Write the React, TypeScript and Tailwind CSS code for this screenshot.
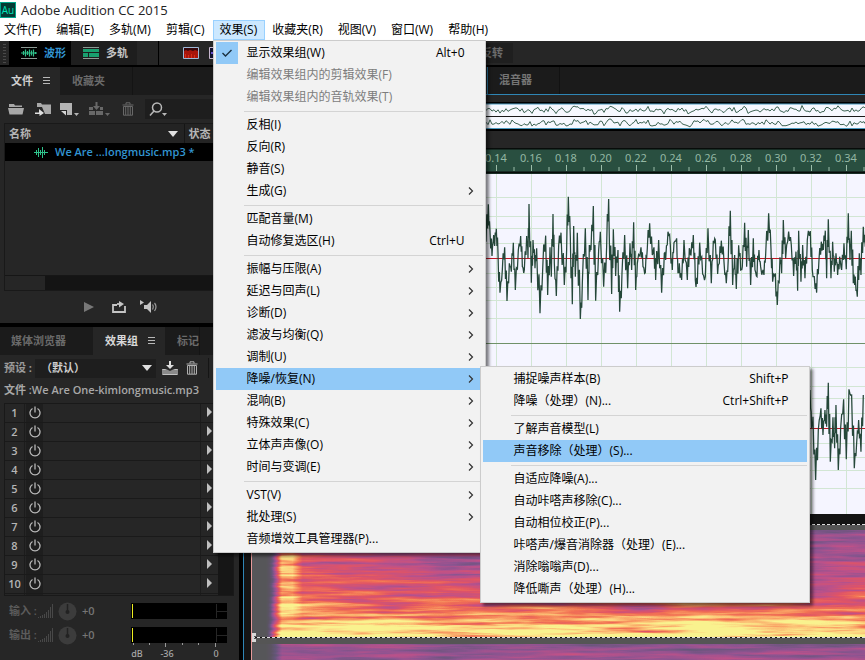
import React from "react";

type Entry = {
  label: string;
  keys?: string;
  disabled?: boolean;
  checked?: boolean;
  more?: boolean;
  active?: boolean;
  children?: Entry[][];
};

const denoise: Entry[][] = [
  [
    { label: "捕捉噪声样本(B)", keys: "Shift+P" },
    { label: "降噪（处理）(N)...", keys: "Ctrl+Shift+P" },
  ],
  [{ label: "了解声音模型(L)" }, { label: "声音移除（处理）(S)...", active: true }],
  [
    { label: "自适应降噪(A)..." },
    { label: "自动咔嗒声移除(C)..." },
    { label: "自动相位校正(P)..." },
    { label: "咔嗒声/爆音消除器（处理）(E)..." },
    { label: "消除嗡嗡声(D)..." },
    { label: "降低嘶声（处理）(H)..." },
  ],
];

const effects: Entry[][] = [
  [
    { label: "显示效果组(W)", keys: "Alt+0", checked: true },
    { label: "编辑效果组内的剪辑效果(F)", disabled: true },
    { label: "编辑效果组内的音轨效果(T)", disabled: true },
  ],
  [{ label: "反相(I)" }, { label: "反向(R)" }, { label: "静音(S)" }, { label: "生成(G)", more: true }],
  [{ label: "匹配音量(M)" }, { label: "自动修复选区(H)", keys: "Ctrl+U" }],
  [
    { label: "振幅与压限(A)", more: true },
    { label: "延迟与回声(L)", more: true },
    { label: "诊断(D)", more: true },
    { label: "滤波与均衡(Q)", more: true },
    { label: "调制(U)", more: true },
    { label: "降噪/恢复(N)", more: true, active: true, children: denoise },
    { label: "混响(B)", more: true },
    { label: "特殊效果(C)", more: true },
    { label: "立体声声像(O)", more: true },
    { label: "时间与变调(E)", more: true },
  ],
  [{ label: "VST(V)", more: true }, { label: "批处理(S)", more: true }, { label: "音频增效工具管理器(P)..." }],
];

const menus = ["文件(F)", "编辑(E)", "多轨(M)", "剪辑(C)", "效果(S)", "收藏夹(R)", "视图(V)", "窗口(W)", "帮助(H)"];

function Menu({ groups, className }: { groups: Entry[][]; className: string }) {
  return (
    <div
      role="menu"
      className={`absolute border border-[#cccccc] bg-[#f2f2f2] px-[2px] pt-px pb-[2px] text-black shadow-[3px_3px_3px_rgba(0,0,0,0.5)] ${className}`}
    >
      {groups.map((group, g) => (
        <React.Fragment key={g}>
          {g > 0 && (
            <div role="separator" className="flex h-[6px] items-center pl-[28px]">
              <div className="h-px w-full bg-[#d4d4d4]" />
            </div>
          )}
          {group.map((e) => (
            <div key={e.label} className="relative">
              <button
                type="button"
                role={e.checked ? "menuitemcheckbox" : "menuitem"}
                aria-checked={e.checked}
                disabled={e.disabled}
                className={`flex h-[22px] w-full items-center text-left text-xs whitespace-nowrap ${e.active ? "bg-[#91c9f7]" : ""} ${e.disabled ? "text-[#7d7d7d]" : ""}`}
              >
                <span className="mr-[9px] flex h-full w-[22px] shrink-0 items-center justify-center">
                  {e.checked && (
                    <span className="flex h-full w-full items-center justify-center bg-[#91c9f7]">
                      <svg width="12" height="10" viewBox="0 0 12 10" fill="none" stroke="#1b3040" strokeWidth="1.4">
                        <path d="M1.5 5 4.5 8 10.5 2" />
                      </svg>
                    </span>
                  )}
                </span>
                <span className="flex-1">{e.label}</span>
                {e.keys && <span className="mr-[18px]">{e.keys}</span>}
                {e.more && (
                  <svg className="mr-[9px]" width="6" height="10" viewBox="0 0 6 10" fill="none" stroke="#333" strokeWidth="1.2">
                    <path d="M1 1.5 4.5 5 1 8.5" />
                  </svg>
                )}
              </button>
              {e.children && <Menu groups={e.children} className="-top-[2px] left-[264px] w-[330px]" />}
            </div>
          ))}
        </React.Fragment>
      ))}
    </div>
  );
}

function MenuBar() {
  return (
    <nav className="relative z-50 h-[21px] bg-white text-xs text-black">
      <div role="menubar" className="flex">
        {menus.map((m, i) => (
          <div key={m} className="relative">
            <button
              type="button"
              className={`h-5 border pr-[7px] whitespace-nowrap ${i === 0 ? "pl-[3px]" : "pl-[6px]"} ${i === 4 ? "border-[#99d1ff] bg-[#cce8ff]" : "border-transparent"}`}
            >
              {m}
            </button>
            {i === 4 && <Menu groups={effects} className="top-full left-0 w-[273px]" />}
          </div>
        ))}
      </div>
    </nav>
  );
}

const Down = () => (
  <svg width="10" height="6" viewBox="0 0 10 6" fill="#e0e0e0">
    <path d="M0 0h10L5 6z" />
  </svg>
);

const Bars = () => (
  <svg width="8" height="8" viewBox="0 0 8 8" stroke="#b8b8b8" strokeWidth="1">
    <path d="M0 .5h7M0 3.5h7M0 6.5h7" />
  </svg>
);

const Trash = ({ color }: { color: string }) => (
  <svg width="12" height="14" viewBox="0 0 12 14" fill="none" stroke={color}>
    <path d="M.5 3h11M4 2.5V.8h4v1.7M1.5 4.5h9v8.7h-9zM3.7 5v8M6 5v8M8.300 5v8" />
  </svg>
);

function AppToolbar() {
  return (
    <div className="flex h-6 items-stretch bg-[#262626] text-[11px] font-bold">
      <svg width="9" height="24" viewBox="0 0 9 24" className="shrink-0">
        <path d="M4.500 3v20" stroke="#4a4a4a" strokeWidth="3" strokeDasharray="1 2" />
      </svg>
      <button type="button" className="flex w-[62px] items-center gap-[7px] bg-black pl-3 text-[#3295d2]">
        <svg width="16" height="12" viewBox="0 0 16 12" fill="none">
          <path d="M0 .5h16M0 11.500h16" stroke="#8c9a94" />
          <path d="M0 6h16" stroke="#2fc28b" />
          <path d="M2.500 4v4M4.500 2.500v7M6.500 4v4M8.500 2.500v7M10.500 3.500v5M12.500 2.500v7M14.500 5v2" stroke="#2fc28b" strokeWidth="1.200" />
        </svg>
        波形
      </button>
      <button type="button" className="flex w-[66px] items-center gap-[7px] bg-[#1e1e1e] pl-3 text-[#c4c4c4]">
        <svg width="16" height="12" viewBox="0 0 16 12">
          <path d="M0 .5h16M0 11.500h16" stroke="#8c9a94" />
          <path d="M0 2h16v3H0zM0 6h5v4H0zM6 6h10v4H6z" fill="#19a06f" />
        </svg>
        多轨
      </button>
      <span className="ml-[21px] w-px bg-black" />
      <button type="button" aria-label="频谱频率显示" className="ml-6">
        <svg width="16" height="12" viewBox="0 0 16 12">
          <path d="M.5.5h15v11H.5z" fill="#a8160c" stroke="#9db9d8" />
          <path d="M1 4 3 3l2 1 2-1 3 1 2-1 3 1V1H1z" fill="#35060a" />
          <path d="M2.500 7v4M5.500 8v3M8.500 7v4M11.500 8v3" stroke="#d82c16" />
        </svg>
      </button>
      <button type="button" aria-label="频谱音高显示" className="ml-[10px]">
        <svg width="16" height="12" viewBox="0 0 16 12">
          <path d="M.5.500h15v11H.5z" fill="#101030" stroke="#c8b8d0" />
          <path d="M2 6h12" stroke="#6a52d0" strokeWidth="2" />
        </svg>
      </button>
      <button type="button" className="my-[2px] ml-[240px] w-[48px] bg-[#1f1f1f] pr-[10px] text-right text-[#6b6b6b]">
        反转
      </button>
    </div>
  );
}

function FilesPanel() {
  return (
    <section className="flex h-[256px] flex-col bg-[#262626]">
      <div role="tablist" className="flex h-7 bg-[#1b1b1b] text-[11px] font-bold">
        <button type="button" role="tab" className="flex w-[60px] items-center gap-[10px] bg-[#262626] pl-[11px] text-[#d0d0d0]">
          文件
          <Bars />
        </button>
        <button type="button" role="tab" className="w-[73px] border-r border-[#141414] pl-3 text-left text-[#6a6a6a]">
          收藏夹
        </button>
      </div>
      <div className="flex h-[28px] items-center text-[#b0b0b0]">
        <button type="button" aria-label="打开文件" className="ml-2">
          <svg width="16" height="12" viewBox="0 0 16 12" fill="#a8a8a8">
            <path d="M1 4V1h5l1 1.500h7V4zM0 5h16l-1.500 6.500h-13z" />
          </svg>
        </button>
        <button type="button" aria-label="导入文件" className="ml-[11px]">
          <svg width="17" height="14" viewBox="0 0 17 14" fill="#a8a8a8">
            <path d="M2 5V1h4l1 1.500h9V12h-6L7 5z" />
            <path d="M0 10.500h4V7l5 4-4.500 3v-2H0z" fill="#dedede" />
          </svg>
        </button>
        <button type="button" aria-label="新建文件" className="ml-2">
          <svg width="20" height="15" viewBox="0 0 20 15" fill="#b4b4b4">
            <path d="M0 1h12v12H7V8H0z" />
            <path d="M1 9h5v4.500z" fill="#d6d6d6" />
            <path d="M14 11h5l-2.500 3z" />
          </svg>
        </button>
        <button type="button" aria-label="插入到多轨混音" className="ml-[9px]">
          <svg width="22" height="15" viewBox="0 0 22 15" fill="#686868">
            <path d="M0 5h4v3H0zM11 5h3v3h-3zM0 9h6v4H0zM7 9h7v4H7zM6.500 0h2v4H11L7.500 8 4 4h2.500z" />
            <path d="M16 11h5l-2.500 3z" />
          </svg>
        </button>
        <button type="button" aria-label="删除" className="mr-[11px] ml-[11px]">
          <Trash color="#686868" />
        </button>
        <label className="flex h-5 flex-1 items-center bg-[#1e1e1e] pl-1">
          <svg className="shrink-0" width="20" height="15" viewBox="0 0 20 15" fill="none" stroke="#b8b8b8" strokeWidth="1.500">
            <circle cx="8" cy="5.500" r="4.500" />
            <path d="M5 9 1 13.500" />
            <path d="M13 11h5l-2.500 3z" fill="#b8b8b8" stroke="none" />
          </svg>
          <input type="search" aria-label="搜索" className="w-full min-w-0 bg-transparent outline-none" />
        </label>
      </div>
      <div className="ml-1 flex flex-1 flex-col border border-[#191919]">
        <table className="w-full table-fixed border-collapse text-[11px] font-semibold text-[#b5b5b5]">
          <thead>
            <tr className="h-[19px] bg-[#232323]">
              <th className="w-[179px] border-r border-[#151515] p-0 pl-1 text-left leading-[18px]">
                <span className="flex items-center justify-between pr-[6px]">
                  名称
                  <Down />
                </span>
              </th>
              <th className="p-0 pl-1 text-left leading-[18px]">状态</th>
            </tr>
          </thead>
          <tbody>
            <tr className="h-[18px] bg-black">
              <td colSpan={2} className="p-0 leading-[18px] whitespace-nowrap text-[#3295d2]">
                <span className="flex items-center gap-[7px] pl-[29px]">
                  <svg width="14" height="11" viewBox="0 0 14 11" stroke="#2fc28b" fill="none">
                    <path d="M0 5.500h14M2.500 3v5M4.500 1v9M6.500 3v5M8.500 0v11M10.500 3v5" />
                  </svg>
                  We Are ...longmusic.mp3 *
                </span>
              </td>
            </tr>
          </tbody>
        </table>
        <div className="flex-1" />
        <div className="h-[15px] border-t border-[#161616] bg-[#141414]">
          <div className="h-full w-10 bg-[#262626]" />
        </div>
      </div>
      <div className="flex h-[32px] items-center pb-px pl-[84px]">
        <button type="button" aria-label="播放">
          <svg width="10" height="10" viewBox="0 0 10 10" fill="#777">
            <path d="M0 0l10 5L0 10z" />
          </svg>
        </button>
        <button type="button" aria-label="循环播放" className="ml-[18px]">
          <svg width="14" height="12" viewBox="0 0 14 12" fill="none" stroke="#c4c4c4" strokeWidth="1.800">
            <path d="M5 4H1v7h12V5" />
            <path d="M5 3h3" />
            <path d="M7 0l5 3-5 3.500z" fill="#c4c4c4" stroke="none" />
          </svg>
        </button>
        <button type="button" aria-label="自动播放" className="ml-[14px]">
          <svg width="18" height="13" viewBox="0 0 18 13" fill="#c4c4c4">
            <path d="M0 0l4 2.500L0 5zM4 5h3l4-4v12L7 9H4z" />
            <path d="M12.500 4.500q1.500 2 0 5M14.500 3q3 3.500 0 8" fill="none" stroke="#9a9a9a" strokeWidth="1.200" />
          </svg>
        </button>
      </div>
    </section>
  );
}

const Power = () => (
  <svg width="12" height="13" viewBox="0 0 12 13" fill="none" stroke="#b8b8b8" strokeWidth="1.300">
    <path d="M3.500 2.500a5 5 0 1 0 5 0M6 .5v6" />
  </svg>
);

function Level({ label, id }: { label: string; id: string }) {
  return (
    <div className="flex h-6 items-center text-[11px] font-semibold text-[#5c5c5c]">
      <label htmlFor={id} className="w-[29px] shrink-0 whitespace-nowrap">{label} :</label>
      <svg width="16" height="14" viewBox="0 0 16 14" stroke="#484848">
        <path d="M.5 14v-1M2.500 14v-2M4.500 14v-3M6.500 14v-4M8.500 14V8M10.500 14V6M12.500 14V3M14.500 14V0" />
      </svg>
      <svg className="ml-1" width="19" height="19" viewBox="0 0 19 19">
        <circle cx="9.500" cy="9.500" r="9" fill="#3c3c3c" />
        <circle cx="9.500" cy="10" r="2" fill="#222" />
        <path d="M9.500 2v8" stroke="#222" strokeWidth="1.500" />
      </svg>
      <input id={id} defaultValue="+0" className="ml-[5px] w-5 bg-transparent text-[#757575] outline-none" />
      <div className="ml-[29px] flex h-4 w-24 bg-black py-px pl-px">
        <div className="w-px bg-[#eeee20]" />
        <div className="ml-[83px] w-px bg-[#262626]" />
        <div className="flex flex-1 items-center">
          <div className="h-px w-full bg-[#262626]" />
        </div>
      </div>
    </div>
  );
}

function RackPanel() {
  return (
    <section className="mt-1 flex flex-1 flex-col bg-[#262626] text-[11px] font-bold">
      <div role="tablist" className="flex h-7 shrink-0 bg-[#1b1b1b] text-[#6a6a6a]">
        <button type="button" role="tab" className="w-[93px] pl-[11px] text-left">媒体浏览器</button>
        <button type="button" role="tab" className="flex w-[72px] items-center gap-[10px] bg-[#262626] pl-3 text-[#d8d8d8]">
          效果组
          <Bars />
        </button>
        <button type="button" role="tab" className="w-[35px] border-r border-[#141414] text-right">标记</button>
      </div>
      <div className="mt-[2px] flex h-[22px] items-center pl-1 text-[#9a9a9a]">
        <label htmlFor="preset" className="w-[31px] whitespace-nowrap">预设 :</label>
        <div className="relative flex h-[19px] w-[121px] items-center bg-[#1e1e1e]">
          <select id="preset" className="w-full appearance-none bg-transparent pl-[6px] text-[#cfcfcf] outline-none">
            <option>（默认）</option>
          </select>
          <span className="pointer-events-none absolute right-1"><Down /></span>
        </div>
        <button type="button" aria-label="保存预设" className="ml-[6px]">
          <svg width="16" height="14" viewBox="0 0 16 14" fill="#b8b8b8">
            <path d="M7 0h2v4h3L8 8 4 4h3z" fill="#ddd" />
            <path d="M0 8h4l4 2 4-2h4v5.500H0z" fill="#8a8a8a" />
            <path d="M.5 8.500h3M12.500 8.500h3M.5 13.500h15" stroke="#c0c0c0" />
          </svg>
        </button>
        <button type="button" aria-label="删除预设" className="ml-2"><Trash color="#b0b0b0" /></button>
        <span className="ml-[10px] h-5 w-px bg-[#151515]" />
      </div>
      <p className="flex h-6 items-center pb-[2px] pl-1 font-semibold whitespace-nowrap text-[#a8a8a8]">文件 :We Are One-kimlongmusic.mp3</p>
      <div className="mr-[5px] ml-1 flex h-[193px] shrink-0 overflow-hidden border border-[#191919]">
        <ol className="flex-1 font-semibold">
          {[1, 2, 3, 4, 5, 6, 7, 8, 9, 10, 11].map((n) => (
            <li key={n} className="flex h-[19px] border-b border-[#1a1a1a] text-[#b5b5b5]">
              <span className="w-5 border-r border-[#1c1c1c] text-center leading-[17px]">{n < 11 ? n : ""}</span>
              <button type="button" aria-label={`效果 ${n} 开关`} className="ml-px flex w-[17px] items-center justify-center bg-[#1e1e1e] pb-[2px]">
                {n < 11 && <Power />}
              </button>
              <span className="flex-1 border-r border-[#1c1c1c]" />
              <button type="button" aria-label={`效果 ${n} 菜单`} className="w-[17px] pb-[2px] pl-[6px]">
                <svg width="5" height="10" viewBox="0 0 5 10" fill="#c0c0c0"><path d="M0 0l5 5-5 5z" /></svg>
              </button>
            </li>
          ))}
        </ol>
        <div className="w-[15px] bg-[#161616]" />
      </div>
      <div className="pt-[3px] pl-[9px]">
        <Level label="输入" id="gain-in" />
        <Level label="输出" id="gain-out" />
        <svg className="-mt-1 ml-[120px]" width="104" height="17" viewBox="0 0 104 17" fontFamily="Noto Sans, sans-serif" fontSize="9" fontWeight="500" fill="#a8a8a8" textAnchor="middle">
          <path d="M4.500 0v2M20.500 0v2M36.500 0v4M53.500 0v2M69.500 0v2M86.500 0v4" stroke="#999" />
          <text x="8" y="14">dB</text>
          <text x="38" y="14">-36</text>
          <text x="87" y="14">0</text>
        </svg>
      </div>
    </section>
  );
}

const left = "48,215 55,103 60,185 66,258 71,195 74,228 79,176 84,250 90,368 97,300 104,232 111,393 118,280 124,305 130,218 136,360 145,240 152,198 157,290 163,300 170,198 174,265 177,102 184,338 189,210 195,295 200,235 210,430 218,300 227,197 233,375 240,232 244,320 249,132 253,280 259,378 266,228 273,188 283,345 290,238 295,80 301,200 307,403 311,168 316,320 322,188 331,447 337,340 346,175 354,390 358,225 363,240 370,108 377,392 386,240 391,185 401,350 410,228 416,87 425,372 430,178 437,318 444,240 449,425 456,310 464,195 473,355 480,220 485,300 491,157 497,360 502,280 513,232 519,290 526,308 532,235 539,160 547,255 552,232 557,330 566,210 575,368 583,250 587,270 594,185 601,225 607,300 612,218 620,205 624,310 628,280 635,330 642,210 652,330 658,235 663,255 670,195 676,330 682,342 689,218 698,312 706,320 714,175 724,340 730,212 736,210 743,312 748,280 754,212 762,275 769,340 775,265 781,122 788,345 794,255 799,357 806,226 812,300 817,290 824,158 830,290 835,180 842,345 850,205 855,300 861,320 867,240 872,290 882,315 887,255 896,130 903,235 908,335 916,310 922,405 930,262 935,310 940,150 947,265 956,185 964,225 971,318 978,245 983,362 986,182 993,335 998,225 1005,325 1012,210 1021,183 1027,300 1033,320 1040,368 1047,270 1054,215 1060,240 1066,182 1070,325 1075,148 1083,325 1088,215 1093,305 1098,250 1103,315 1109,260 1115,300 1122,220 1129,298 1135,130 1140,270 1144,182 1150,340 1156,320 1162,380 1168,250 1173,315 1180,170 1186,230";
const right = "1005,90 1010,205 1014,170 1022,360 1030,210 1038,145 1044,225 1050,150 1055,200 1060,68 1066,305 1074,172 1079,265 1083,135 1090,330 1097,205 1106,118 1114,298 1122,88 1130,105 1138,325 1145,250 1151,180 1158,275 1165,105";

function detail(points: string, seed: number) {
  let s = seed;
  const rand = () => (s = (s * 16807) % 2147483647) / 2147483647 - 0.5;
  const pts = points.split(" ").map((p) => p.split(",").map(Number));
  const out: string[] = [];
  pts.forEach(([x, y], i) => {
    out.push(`${x},${y}`);
    const next = pts[i + 1];
    if (!next) return;
    const [nx, ny] = next;
    out.push(`${x + (nx - x) * 0.35},${y + (ny - y) * 0.6 + rand() * 30}`);
    out.push(`${x + (nx - x) * 0.7},${y + (ny - y) * 0.45 + rand() * 30}`);
  });
  return out.join(" ");
}

function overview(mid: number, seed: number) {
  let s = seed;
  const rand = () => (s = (s * 16807) % 2147483647) / 2147483647 - 0.5;
  const out: string[] = [];
  for (let x = 0; x < 1600; x += 2) {
    const y = mid + Math.sin(x / 1.9) * 1.2 + Math.sin(x / 5.1 + seed) + rand() * 5;
    out.push(`${x},${y.toFixed(1)}`);
  }
  return out.join(" ");
}

const ticks = Array.from({ length: 60 }, (_, i) => i);
const gridRows = [23, 42, 54, 69, 99, 113, 126, 144];

function Editor() {
  return (
    <main className="flex min-w-0 flex-1 flex-col border-l border-[#2f86b5] bg-[#262626]">
      <div role="tablist" className="flex h-7 shrink-0 border-b border-[#2f86b5] bg-[#1b1b1b] text-[11px] font-bold text-[#757575]">
        <button type="button" role="tab" aria-label="编辑器" className="w-[244px] border-r border-[#2f86b5] bg-[#262626]" />
        <button type="button" role="tab" className="w-[72px] border-r border-[#121212] pl-[11px] text-left">混音器</button>
      </div>
      <svg className="mt-[7px] h-[29px] w-full shrink-0 bg-[#f6f8ff]">
        <path d="M0 1h4000M0 28h4000" stroke="#000" strokeWidth="2" />
        <path d="M0 2h4000M0 26.500h4000" stroke="#4b9ac0" />
        <path d="M0 14.500h4000" stroke="#1a1a1a" />
        <g fill="none" stroke="#3e6454" strokeWidth="1">
          <polyline points={overview(8, 71)} />
          <polyline points={overview(21, 1931)} />
        </g>
      </svg>
      <svg className="mt-[17px] h-[26px] w-full shrink-0 bg-[#294f40]" fontFamily="Noto Sans, sans-serif" fontSize="11">
        <path d="M0 .5h4000M0 24.500h4000" stroke="#080c0a" strokeWidth="2" />
        {ticks.map((i) => (
          <g key={i}>
            {i > 6 && i < 18 && (
              <text x={7 + i * 35} y="14" textAnchor="middle" fill="#94b8a4">{(i * 0.02).toFixed(2)}</text>
            )}
            <path d={`M${7.5 + i * 35} 17v6M${25 + i * 35} 19v4`} stroke="#9dbda9" />
          </g>
        ))}
      </svg>
      <svg className="h-[340px] w-full shrink-0 bg-[#f5f5ff]">
        <g stroke="#d2e6d4">
          {ticks.map((i) => <path key={i} d={`M${7.500 + i * 35} 0v340`} />)}
          {gridRows.map((y) => <path key={y} d={`M0 ${y + 0.5}h4000M0 ${y + 170.5}h4000`} />)}
        </g>
        <path d="M0 169.500h4000" stroke="#6f9168" />
        <path d="M0 84.500h4000M0 254.500h4000" stroke="#c01822" />
        <g fill="none" stroke="#25473a">
          <polyline points={detail(left, 37)} strokeWidth="3.800" transform="translate(226 -4) scale(.3333)" />
          <polyline points={detail(right, 91)} strokeWidth="3.800" transform="translate(231 186) scale(.3333)" />
        </g>
      </svg>
      <svg className="min-h-[146px] w-full flex-1 bg-[#141414]">
        <defs>
          <filter id="heat" x="0" y="0" width="100%" height="100%" colorInterpolationFilters="sRGB">
            <feTurbulence type="fractalNoise" baseFrequency="0.012 0.22" numOctaves="4" seed="8" />
            <feColorMatrix values="1 0 0 0 0 1 0 0 0 0 1 0 0 0 0 0 0 0 0 1" result="noise" />
            <feComposite in="SourceGraphic" in2="noise" operator="arithmetic" k1="1" k2="0.5" k3="0" k4="0" />
            <feComponentTransfer>
              <feFuncR type="table" tableValues="0.34 0.36 0.4 0.56 0.74 0.88 0.95 0.98 0.99 0.98" />
              <feFuncG type="table" tableValues="0.34 0.33 0.34 0.33 0.32 0.33 0.45 0.64 0.83 0.95" />
              <feFuncB type="table" tableValues="0.35 0.39 0.48 0.57 0.54 0.4 0.33 0.4 0.5 0.56" />
              <feFuncA type="linear" slope="0" intercept="1" />
            </feComponentTransfer>
          </filter>
          <linearGradient id="level" x1="0" y1="0" x2="0" y2="1">
            <stop offset="0" stopColor="#555" />
            <stop offset=".3" stopColor="#686868" />
            <stop offset=".6" stopColor="#808080" />
            <stop offset=".76" stopColor="#a2a2a2" />
            <stop offset=".86" stopColor="#dadada" />
            <stop offset="1" stopColor="#fff" />
          </linearGradient>
          <linearGradient id="attack" gradientUnits="userSpaceOnUse" x1="16" y1="0" x2="220" y2="0">
            <stop offset="0" stopColor="#fff" stopOpacity=".1" />
            <stop offset=".06" stopColor="#fff" stopOpacity=".7" />
            <stop offset=".12" stopColor="#fff" stopOpacity=".7" />
            <stop offset=".17" stopColor="#fff" stopOpacity=".22" />
            <stop offset=".6" stopColor="#fff" stopOpacity=".1" />
            <stop offset="1" stopColor="#fff" stopOpacity="0" />
          </linearGradient>
          <linearGradient id="silence" gradientUnits="userSpaceOnUse" x1="14" y1="0" x2="30" y2="0">
            <stop offset="0" stopColor="#000" />
            <stop offset="1" stopColor="#000" stopOpacity="0" />
          </linearGradient>
        </defs>
        <rect x="8" y="11" width="4000" height="200" fill="#555" />
        <svg x="8" y="16" width="1600" height="107">
          <g filter="url(#heat)">
            <rect width="1600" height="107" fill="url(#level)" />
            <rect width="1600" height="107" fill="url(#attack)" />
            <rect width="1600" height="107" fill="url(#silence)" />
          </g>
        </svg>
        <svg x="8" y="130" width="1600" height="107">
          <g filter="url(#heat)">
            <rect width="1600" height="107" fill="url(#level)" />
            <rect width="1600" height="107" fill="url(#silence)" />
          </g>
        </svg>
        <path d="M8 10.500h4000M8 123.500h4000" stroke="#111" />
        <path d="M8 10.500h4000M8 123.500h4000" stroke="#ddd" strokeDasharray="3 2" />
        <path d="M7.500 0v400" stroke="#e79a9a" />
        <path d="M8 119h4v3h-2v3h2v3H8z" fill="#d8d8d8" />
      </svg>
    </main>
  );
}

export default function App() {
  return (
    <div className="flex h-screen flex-col overflow-hidden bg-black font-['Open_Sans','Noto_Sans_CJK_SC',sans-serif]">
      <header className="flex h-5 shrink-0 items-center gap-[5px] bg-white text-[13px] leading-5 text-[#222]">
        <span className="flex h-4 w-4 items-center justify-center border border-[#00a58c] bg-[#053b35] text-[10px] leading-3 text-[#00e4bb]">Au</span>
        <h1>Adobe Audition CC 2015</h1>
      </header>
      <MenuBar />
      <AppToolbar />
      <div className="mt-[2px] flex min-h-0 flex-1 gap-1">
        <aside className="flex w-[239px] shrink-0 flex-col">
          <FilesPanel />
          <RackPanel />
        </aside>
        <Editor />
      </div>
    </div>
  );
}
